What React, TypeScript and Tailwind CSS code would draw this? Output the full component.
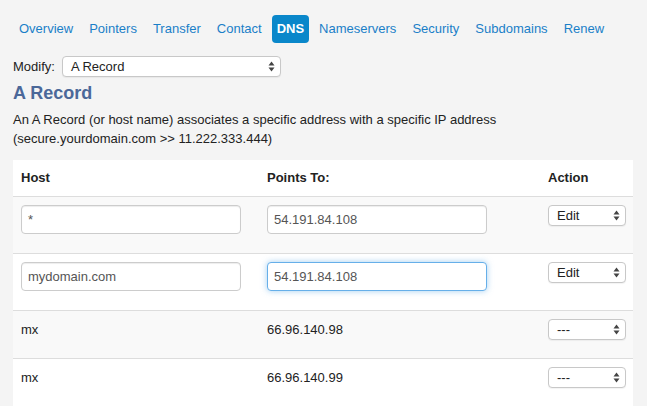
import React from "react";

const tabs = ["Overview", "Pointers", "Transfer", "Contact", "DNS", "Nameservers", "Security", "Subdomains", "Renew"];

const Arrows: React.FC = () => (
    <svg width="7" height="11" viewBox="0 0 7 11" className="shrink-0">
        <path d="M3.5 0.5 L6.5 4.5 L0.5 4.5 Z" fill="#444" />
        <path d="M3.5 10.5 L6.5 6.5 L0.5 6.5 Z" fill="#444" />
    </svg>
);

const FakeSelect: React.FC<{ value: string; className: string }> = ({ value, className }) => (
    <div className={`flex items-center justify-between bg-white border border-[#c8c8c8] rounded-[4px] pl-[8px] pr-[5px] text-[13px] text-[#222] shadow-[0_1px_1px_rgba(0,0,0,0.05)] ${className}`}>
        <span>{value}</span>
        <Arrows />
    </div>
);

const TextBox: React.FC<{ value: string; focused?: boolean }> = ({ value, focused }) => (
    <div
        className={`w-[220px] h-[29px] flex items-center bg-white rounded-[4px] px-[6px] text-[13px] text-[#555] border ${
            focused
                ? "border-[#66afe9] shadow-[0_0_6px_rgba(102,175,233,0.6)]"
                : "border-[#ccc] shadow-[inset_0_1px_1px_rgba(0,0,0,0.075)]"
        }`}
    >
        {value}
    </div>
);

type Row = { host: string; points: string; action: string; editable: boolean; focused?: boolean };

const rows: Row[] = [
    { host: "*", points: "54.191.84.108", action: "Edit", editable: true },
    { host: "mydomain.com", points: "54.191.84.108", action: "Edit", editable: true, focused: true },
    { host: "mx", points: "66.96.140.98", action: "---", editable: false },
    { host: "mx", points: "66.96.140.99", action: "---", editable: false },
];

export default function App() {
    return (
        <div className="min-h-screen bg-[#f4f4f4] px-[13px] text-[#333] font-['Liberation_Sans',Arial,sans-serif] text-[13px]">
            <nav className="flex gap-[4px] pt-[15px]">
                {tabs.map((t) =>
                    t === "DNS" ? (
                        <span key={t} className="h-[28px] flex items-center px-[5px] rounded-[4px] bg-[#0a87ca] text-white font-bold text-[13px]">
                            {t}
                        </span>
                    ) : (
                        <span key={t} className="h-[28px] flex items-center px-[6px] text-[#1a7fc8] text-[13px]">
                            {t}
                        </span>
                    ),
                )}
            </nav>

            <div className="flex items-center gap-[7px] mt-[13px]">
                <span className="text-[13px] text-[#222]">Modify:</span>
                <FakeSelect value="A Record" className="w-[219px] h-[21px]" />
            </div>

            <h2 className="mt-[6px] text-[18px] leading-[20px] font-bold text-[#4b6899]">A Record</h2>
            <p className="mt-[7px] leading-[19px] text-[13px] text-[#222]">
                An A Record (or host name) associates a specific address with a specific IP address
                <br />
                (secure.yourdomain.com &gt;&gt; 11.222.333.444)
            </p>

            <table className="mt-[12px] w-[620px] table-fixed bg-white border-collapse">
                <colgroup>
                    <col className="w-[246px]" />
                    <col className="w-[281px]" />
                    <col className="w-[93px]" />
                </colgroup>
                <thead>
                    <tr>
                        <th className="text-left font-bold px-[8px] pt-[8px] pb-[8px] leading-[20px] text-[#222]">Host</th>
                        <th className="text-left font-bold px-[8px] pt-[8px] pb-[8px] leading-[20px] text-[#222]">Points To:</th>
                        <th className="text-left font-bold px-[8px] pt-[8px] pb-[8px] leading-[20px] text-[#222]">Action</th>
                    </tr>
                </thead>
                <tbody>
                    {rows.map((r, i) => (
                        <tr key={i} className={`border-t border-[#ddd] ${i % 2 === 0 ? "bg-[#f9f9f9]" : "bg-white"}`}>
                            {r.editable ? (
                                <>
                                    <td className="align-top px-[8px] pt-[8px] pb-[19px]">
                                        <TextBox value={r.host} />
                                    </td>
                                    <td className="align-top px-[8px] pt-[8px] pb-[19px]">
                                        <TextBox value={r.points} focused={r.focused} />
                                    </td>
                                </>
                            ) : (
                                <>
                                    <td className="align-top px-[8px] pt-[8px] pb-[18px] leading-[21px] text-[#222]">{r.host}</td>
                                    <td className="align-top px-[8px] pt-[8px] pb-[18px] leading-[21px] text-[#222]">{r.points}</td>
                                </>
                            )}
                            <td className="align-top px-[8px] pt-[8px]">
                                <FakeSelect value={r.action} className="w-[78px] h-[21px]" />
                            </td>
                        </tr>
                    ))}
                </tbody>
            </table>
        </div>
    );
}
